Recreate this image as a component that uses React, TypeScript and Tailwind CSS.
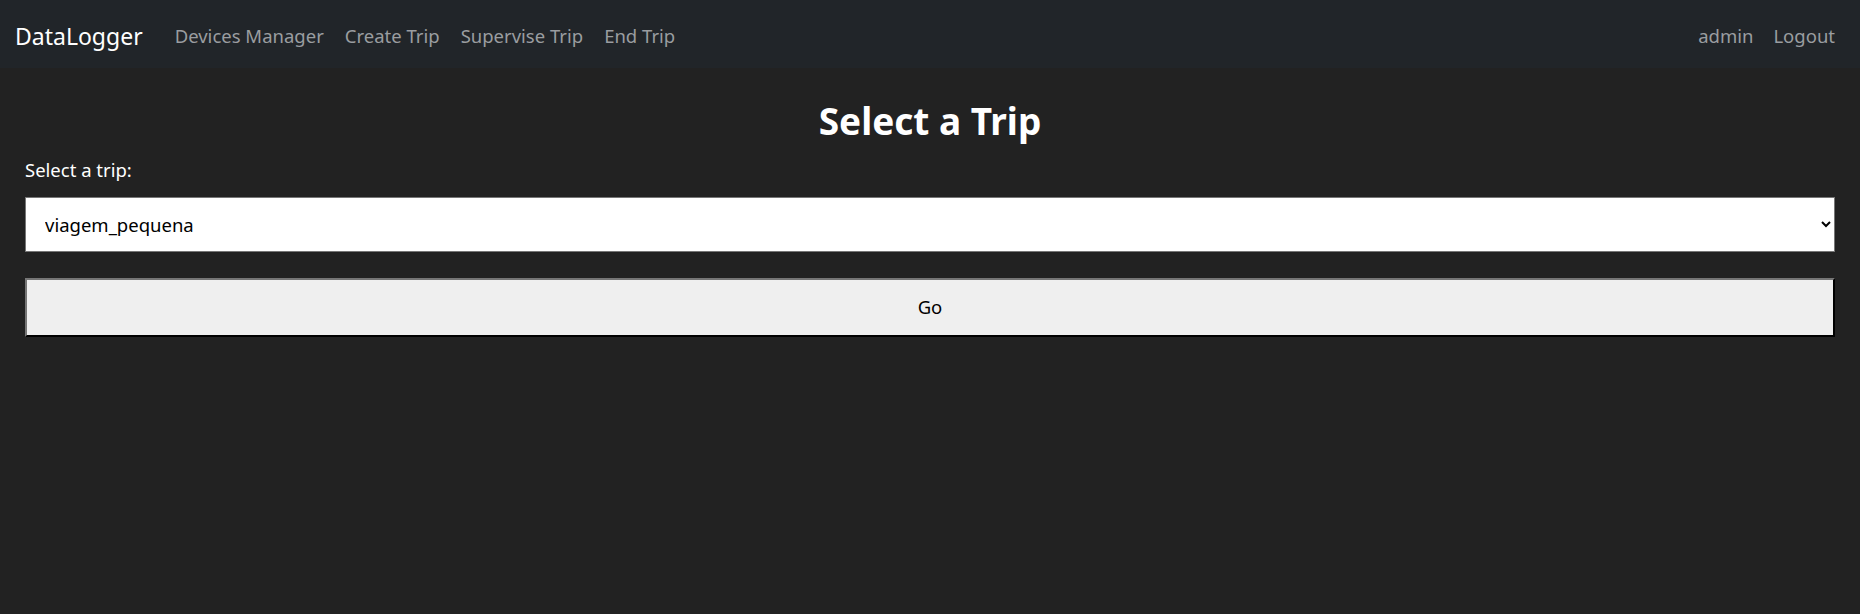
import React, { useState } from 'react';

const navLinks = ['Devices Manager', 'Create Trip', 'Supervise Trip', 'End Trip'];

const trips = ['viagem_pequena', 'viagem_grande', 'viagem_teste'];

export default function App() {
  const [trip, setTrip] = useState(trips[0]);

  return (
    <div className="min-h-screen bg-[#222222] font-['Noto_Sans',sans-serif]">
      {/* Navbar */}
      <nav className="h-[68px] bg-[#212529] flex items-center justify-between pl-[15px] pr-[25px] pt-[4px]">
        <div className="flex items-center">
          <span className="text-[23px] text-white mr-[32px]">DataLogger</span>
          <div className="flex items-center gap-[21px] text-[18.5px] text-[#9a9da0]">
            {navLinks.map((l) => (
              <a key={l} href="#" className="hover:text-white">{l}</a>
            ))}
          </div>
        </div>
        <div className="flex items-center gap-[20px] text-[18.5px] text-[#9a9da0]">
          <a href="#">admin</a>
          <a href="#">Logout</a>
        </div>
      </nav>

      {/* Content */}
      <div className="px-[25px]">
        <h1 className="text-center text-white font-bold text-[37px] leading-none pt-[34px] pb-[17px]">Select a Trip</h1>
        <label className="block text-white text-[18.5px] mb-[13px]">Select a trip:</label>
        <select
          value={trip}
          onChange={(e) => setTrip(e.target.value)}
          className="w-full h-[55px] bg-white text-black text-[18.5px] pl-[15px] pr-[10px] border border-[#767676] outline-none"
        >
          {trips.map((t) => (
            <option key={t} value={t}>{t}</option>
          ))}
        </select>
        <button className="w-full h-[59px] mt-[26px] bg-[#efefef] text-black text-[18.5px] border-2 border-t-[#767676] border-l-[#767676] border-b-black border-r-black">
          Go
        </button>
      </div>
    </div>
  );
}
